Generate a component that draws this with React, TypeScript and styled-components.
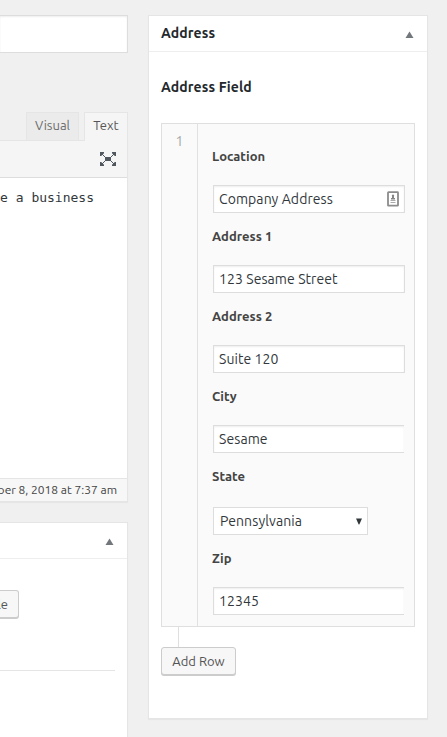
import React from "react";
import styled, { createGlobalStyle, css } from "styled-components";

const GlobalStyle = createGlobalStyle`
  *, *::before, *::after { box-sizing: border-box; }
  body {
    margin: 0;
    background: #f0f0f0;
    color: #32373c;
    font-family: Ubuntu, "Noto Sans", sans-serif;
    font-size: 13px;
  }
`;

const Page = styled.div`
  display: grid;
  grid-template-columns: 128px 280px;
  column-gap: 20px;
  align-items: start;
  height: 737px;
  padding-top: 15px;
  overflow: hidden;
`;

const MainColumn = styled.main`
  display: flex;
  flex-direction: column;
  height: 722px;
  min-width: 0;
`;

const TitleField = styled.div`
  height: 38px;
  background: #fff;
  border: 1px solid #ddd;
  border-left: 0;
  box-shadow: inset 0 1px 2px rgba(0, 0, 0, 0.07);
`;

const Tabs = styled.div`
  display: flex;
  justify-content: flex-end;
  gap: 5px;
  margin-top: 59px;
`;

const Tab = styled.button<{ $active?: boolean }>`
  width: ${(p) => (p.$active ? 44 : 53)}px;
  height: ${(p) => (p.$active ? 29 : 28)}px;
  margin-bottom: ${(p) => (p.$active ? -1 : 0)}px;
  padding: 0 0 ${(p) => (p.$active ? 4 : 3)}px;
  border: 1px solid #e5e5e5;
  border-bottom: 0;
  background: ${(p) => (p.$active ? "#f5f5f5" : "#ebebeb")};
  color: ${(p) => (p.$active ? "#555" : "#6c6c6c")};
  font: 13px/24px Ubuntu, "Noto Sans", sans-serif;
  z-index: 1;
`;

const Editor = styled.section`
  display: flex;
  flex-direction: column;
  height: 362px;
  border: 1px solid #e5e5e5;
  border-left: 0;
  background: #fff;
  box-shadow: 0 1px 1px rgba(0, 0, 0, 0.04);
`;

const Toolbar = styled.div`
  display: flex;
  align-items: center;
  justify-content: flex-end;
  height: 37px;
  padding-right: 10px;
  border-bottom: 1px solid #ddd;
  background: #f5f5f5;
`;

const Content = styled.div`
  display: flex;
  justify-content: flex-end;
  flex: 1;
  padding: 10px 33px 0 0;
  white-space: pre;
  font: 13px/20px "DejaVu Sans Mono", monospace;
`;

const StatusBar = styled.div`
  display: flex;
  justify-content: flex-end;
  height: 23px;
  padding-right: 10px;
  border-top: 1px solid #e5e5e5;
  background: #f7f7f7;
  color: #444;
  font-size: 12px;
  line-height: 21px;
  white-space: nowrap;
`;

const Postbox = styled.section`
  border: 1px solid #e5e5e5;
  background: #fff;
  box-shadow: 0 1px 1px rgba(0, 0, 0, 0.04);
`;

const LowerBox = styled(Postbox)`
  flex: 1;
  margin-top: 20px;
  border-left: 0;
  border-bottom: 0;
`;

const AddressBox = styled(Postbox)`
  height: 704px;
`;

const BoxHeader = styled.header`
  display: flex;
  align-items: center;
  justify-content: space-between;
  height: 36px;
  padding: 2px 13px 0 12px;
  border-bottom: 1px solid #eee;
`;

const Heading = styled.h2`
  margin: 0 0 3px;
  color: #23282d;
  font-size: 14px;
  line-height: 20px;
  font-weight: 700;
  letter-spacing: 0.12px;
`;

const FieldHeading = styled(Heading)`
  margin: 0 0 26px;
`;

const BoxBody = styled.div`
  display: flex;
  flex-direction: column;
  align-items: flex-start;
  padding: 25px 12px 0;
`;

const LowerBody = styled.div`
  display: flex;
  flex-direction: column;
  align-items: flex-start;
  padding: 31px 12px 0 0;
`;

const Divider = styled.hr`
  width: 100%;
  margin: 52px 0 0;
  border: 0;
  border-top: 1px solid #e5e5e5;
`;

const Button = styled.button<{ $cut?: boolean }>`
  display: flex;
  justify-content: ${(p) => (p.$cut ? "flex-end" : "center")};
  width: ${(p) => (p.$cut ? 19 : 75)}px;
  height: 28px;
  padding: 0 ${(p) => (p.$cut ? 10 : 0)}px 0 0;
  border: 1px solid #ccc;
  border-left-width: ${(p) => (p.$cut ? 0 : 1)}px;
  border-radius: ${(p) => (p.$cut ? "0 3px 3px 0" : "3px")};
  background: #f7f7f7;
  box-shadow: 0 1px 0 #ccc;
  color: #555;
  font: 13px/26px Ubuntu, "Noto Sans", sans-serif;
`;

const Repeater = styled.div`
  display: grid;
  grid-template-columns: 36px 1fr;
  width: 254px;
  height: 504px;
  border: 1px solid #dfdfdf;
  background: #fafafa;
`;

const RowNumber = styled.div`
  padding-top: 7px;
  border-right: 1px solid #e1e1e1;
  color: #a5a8ab;
  font-size: 14px;
  line-height: 20px;
  text-align: center;
`;

const Fields = styled.div`
  display: flex;
  flex-direction: column;
  align-items: flex-start;
  padding: 9px 9px 0 14px;
`;

const Label = styled.label<{ $tall?: boolean }>`
  height: ${(p) => (p.$tall ? 54 : 52)}px;
  color: #444;
  font-size: 13px;
  font-weight: 700;
  line-height: 46px;
  letter-spacing: 0.05px;
`;

const control = css`
  height: 28px;
  margin-left: 1px;
  border: 1px solid #ddd;
  background: #fff;
`;

const InputFrame = styled.div<{ $clipped?: boolean }>`
  ${control}
  display: flex;
  align-items: center;
  width: ${(p) => (p.$clipped ? 191 : 192)}px;
  padding: 0 5px;
  border-right-width: ${(p) => (p.$clipped ? 0 : 1)}px;
  box-shadow: inset 0 1px 2px rgba(0, 0, 0, 0.07);
`;

const Input = styled.input`
  flex: 1;
  min-width: 0;
  height: 24px;
  padding: 0;
  border: 0;
  outline: 0;
  background: transparent;
  color: #32373c;
  font: 14px/20px Ubuntu, "Noto Sans", sans-serif;
  letter-spacing: 0.08px;
`;

const SelectFrame = styled.div`
  ${control}
  display: flex;
  align-items: center;
  width: 155px;
  padding: 0 5px 0 6px;
`;

const Select = styled.select`
  flex: 1;
  min-width: 0;
  padding: 0;
  appearance: none;
  border: 0;
  background: transparent;
  color: #32373c;
  font: 14px/20px Ubuntu, "Noto Sans", sans-serif;
  letter-spacing: 0.1px;
`;

const Connector = styled.div`
  width: 1px;
  height: 20px;
  margin-left: 17px;
  background: #dfdfdf;
`;

const ToggleIcon = () => (
  <svg width="10" height="8" viewBox="0 0 10 8">
    <path d="M5.500 .5 9.500 7h-8z" fill="#72777c" />
  </svg>
);

const SelectArrow = () => (
  <svg width="6" height="7" viewBox="0 0 6 7">
    <path d="M0 .5h6L3.3 6.5h-.6z" fill="#32373c" />
  </svg>
);

const ExpandIcon = () => (
  <svg width="18" height="16" viewBox="0 0 18 16" fill="#50575e">
    <path d="M6 6h6v4H6z" />
    <path d="M1 1h4v1.200L2.200 5H1zM17 1h-4v1.200L15.800 5H17zM1 15h4v-1.200L2.200 11H1zM17 15h-4v-1.200L15.800 11H17z" />
    <path d="M3 3l3.500 3.500M15 3l-3.500 3.500M3 13l3.500-3.500M15 13l-3.500-3.500" stroke="#50575e" />
  </svg>
);

const ContactIcon = () => (
  <svg width="12" height="16" viewBox="0 0 12 16">
    <rect x="1" y="1.200" width="10" height="13.500" rx=".5" fill="#fff" stroke="#8c8c8c" strokeWidth="1.800" />
    <path d="M6 3.500a1.200 1.200 0 0 1 1 1.800V7h1v1.500H4V7h1V5.300a1.200 1.200 0 0 1 1-1.800z" fill="#858585" />
    <path d="M3.500 9.500h5M3.500 11.500h5" stroke="#aaa" />
  </svg>
);

const TextField = ({ label, value, clipped, icon }: { label: string; value: string; clipped?: boolean; icon?: React.ReactNode }) => (
  <>
    <Label>{label}</Label>
    <InputFrame $clipped={clipped}>
      <Input defaultValue={value} aria-label={label} />
      {icon}
    </InputFrame>
  </>
);

export default function App() {
  return (
    <Page>
      <GlobalStyle />
      <MainColumn>
        <TitleField />
        <Tabs>
          <Tab>Visual</Tab>
          <Tab $active>Text</Tab>
        </Tabs>
        <Editor>
          <Toolbar>
            <ExpandIcon />
          </Toolbar>
          <Content>e a business</Content>
          <StatusBar>ber 8, 2018 at 7:37 am</StatusBar>
        </Editor>
        <LowerBox>
          <BoxHeader>
            <span />
            <ToggleIcon />
          </BoxHeader>
          <LowerBody>
            <Button $cut>le</Button>
            <Divider />
          </LowerBody>
        </LowerBox>
      </MainColumn>
      <AddressBox>
        <BoxHeader>
          <Heading>Address</Heading>
          <ToggleIcon />
        </BoxHeader>
        <BoxBody>
          <FieldHeading>Address Field</FieldHeading>
          <Repeater>
            <RowNumber>1</RowNumber>
            <Fields>
              <TextField label="Location" value="Company Address" icon={<ContactIcon />} />
              <TextField label="Address 1" value="123 Sesame Street" />
              <TextField label="Address 2" value="Suite 120" />
              <TextField label="City" value="Sesame" clipped />
              <Label $tall>State</Label>
              <SelectFrame>
                <Select aria-label="State" defaultValue="Pennsylvania">
                  <option>Pennsylvania</option>
                </Select>
                <SelectArrow />
              </SelectFrame>
              <TextField label="Zip" value="12345" clipped />
            </Fields>
          </Repeater>
          <Connector />
          <Button>Add Row</Button>
        </BoxBody>
      </AddressBox>
    </Page>
  );
}
